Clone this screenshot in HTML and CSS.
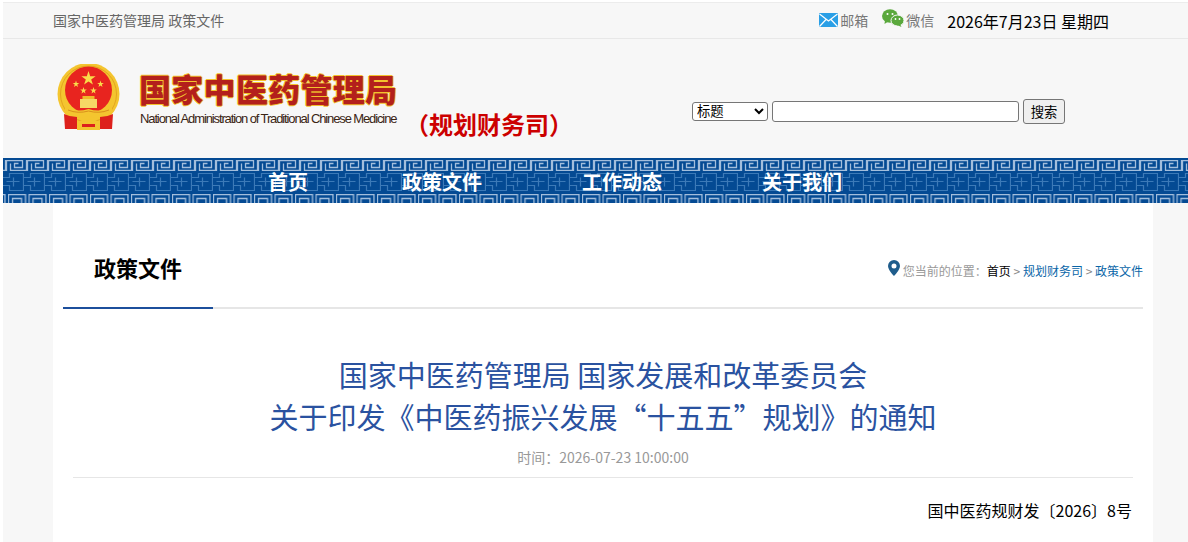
FILE: index.html
```html
<!DOCTYPE html>
<html lang="zh-CN">
<head>
    <meta charset="UTF-8">
    <title>国家中医药管理局 政策文件</title>
    <link rel="stylesheet" href="styles.css">
</head>
<body>
<div class="page">
    <div class="topbar">
        <div class="crumb-title">国家中医药管理局 政策文件</div>
        <div class="topbar-right">
            <span class="top-link top-mail">
                <svg class="mail-icon" width="19" height="14" viewBox="0 0 19 14">
                    <rect width="19" height="14" rx="1" fill="#2a9fe6"/>
                    <path d="M0.5 1 L9.5 8 L18.5 1 M0.5 13.5 L7 6.5 M18.5 13.5 L12 6.5" fill="none" stroke="#fff" stroke-width="1.2"/>
                </svg>
                邮箱
            </span>
            <span class="top-link">
                <svg class="wechat-icon" width="22" height="18" viewBox="0 0 22 18">
                    <ellipse cx="8" cy="7" rx="8" ry="6.8" fill="#5aa83c"/>
                    <path d="M3 11 L2.5 15 L7 12 Z" fill="#5aa83c"/>
                    <ellipse cx="15.5" cy="11.5" rx="6.5" ry="5.5" fill="#5aa83c" stroke="#f7f7f7"/>
                    <path d="M18 15 L19.5 18 L15 16 Z" fill="#5aa83c"/>
                    <circle cx="5.5" cy="5" r="1" fill="#fff"/>
                    <circle cx="10.5" cy="5" r="1" fill="#fff"/>
                    <circle cx="13.5" cy="10" r="0.9" fill="#fff"/>
                    <circle cx="17.5" cy="10" r="0.9" fill="#fff"/>
                </svg>
                微信
            </span>
            <span class="date">2026年7月23日 星期四</span>
        </div>
    </div>

    <div class="header">
        <div class="logo">
            <svg class="emblem" width="64" height="68" viewBox="0 0 64 68">
                <circle cx="32.5" cy="30" r="31" fill="#f4c52f"/>
                <circle cx="32.5" cy="30" r="28" fill="none" stroke="#e3a51f" stroke-width="1"/>
                <circle cx="32.5" cy="26" r="23.5" fill="#e8241f"/>
                <rect x="24" y="35" width="17" height="9" fill="#f6d765"/>
                <rect x="26.5" y="32" width="12" height="3" fill="#f0b92a"/>
                <path d="M9 43 Q20 49 32.5 45 Q45 49 56 43 L56 50 Q45 56 32.5 52 Q20 56 9 50 Z" fill="#f4c52f"/>
                <path d="M12 46 Q22 50 32.5 47 Q43 50 53 46" fill="none" stroke="#d9911c" stroke-width="1"/>
                <path d="M8 50 Q14 53 21 53 L21 65 L9 65 Z M57 50 Q51 53 44 53 L44 65 L56 65 Z" fill="#dd211c"/>
                <path d="M21 58 Q32.5 52 44 58 L44 66 L21 66 Z" fill="#f4c52f"/>
                <rect x="26" y="60" width="13" height="3" fill="#dd211c"/>
                <polygon points="32.5,7 34.2,12.2 39.6,12.2 35.2,15.4 36.9,20.6 32.5,17.4 28.1,20.6 29.8,15.4 25.4,12.2 30.8,12.2" fill="#f9dc4a"/>
                <polygon points="20,16.5 20.8,19 23.3,19 21.3,20.5 22,23 20,21.5 18,23 18.7,20.5 16.7,19 19.2,19" fill="#f9dc4a"/>
                <polygon points="44.5,16.5 45.3,19 47.8,19 45.8,20.5 46.5,23 44.5,21.5 42.5,23 43.2,20.5 41.2,19 43.7,19" fill="#f9dc4a"/>
                <polygon points="27.5,23 28.3,25.5 30.8,25.5 28.8,27 29.5,29.5 27.5,28 25.5,29.5 26.2,27 24.2,25.5 26.7,25.5" fill="#f9dc4a"/>
                <polygon points="37.5,23 38.3,25.5 40.8,25.5 38.8,27 39.5,29.5 37.5,28 35.5,29.5 36.2,27 34.2,25.5 36.7,25.5" fill="#f9dc4a"/>
            </svg>
            <div class="logo-text">
                <div class="logo-cn">国家中医药管理局</div>
                <div class="logo-en">National Administration of Traditional Chinese Medicine</div>
            </div>
            <div class="dept">（规划财务司）</div>
        </div>
        <form class="search">
            <select class="search-type"><option>标题</option></select>
            <input class="search-input" type="text">
            <button class="search-btn" type="button">搜索</button>
        </form>
    </div>

    <div class="nav">
        <svg class="nav-bg" width="1185" height="45">
            <defs>
                <pattern id="keyTop" x="3" y="2" width="21" height="11" patternUnits="userSpaceOnUse">
                    <path d="M0.5 11 V0.5 H16.5 V7.5 H8.5 V3.5 H12.5 M4.5 3.5 V10.5 H20.5 V0" fill="none" stroke="#a3bedc" stroke-width="1.3"/>
                </pattern>
                <pattern id="keyMid" x="0" y="14" width="21" height="20" patternUnits="userSpaceOnUse">
                    <path d="M0 5.5 H6.5 V1.5 H20.5 V18.5 H6.5 V13.5 H0 M3.5 9.5 H16.5 M10.5 5.5 V14.5" fill="none" stroke="#3c7ab8" stroke-width="1.2"/>
                </pattern>
                <pattern id="keyBot" x="5" y="36" width="20.5" height="9" patternUnits="userSpaceOnUse">
                    <path d="M0.5 9 V0.5 H17.5 V9 M4.5 9 V4.5 H13.5 V9" fill="none" stroke="#a3bedc" stroke-width="1.3"/>
                </pattern>
            </defs>
            <rect width="1185" height="45" fill="#044a93"/>
            <rect y="2" width="1185" height="11" fill="url(#keyTop)"/>
            <rect y="14" width="1185" height="20" fill="url(#keyMid)"/>
            <rect y="36" width="1185" height="9" fill="url(#keyBot)"/>
        </svg>
        <a class="nav-item nav-home">首页</a>
        <a class="nav-item">政策文件</a>
        <a class="nav-item">工作动态</a>
        <a class="nav-item">关于我们</a>
    </div>

    <div class="main">
        <div class="section-head">
            <div class="section-title">政策文件</div>
            <div class="location">
                <svg class="pin" width="12" height="16" viewBox="0 0 12 16">
                    <path d="M6 0 A6 6 0 0 0 0 6 C0 10 6 16 6 16 C6 16 12 10 12 6 A6 6 0 0 0 6 0 Z M6 3.5 A2.5 2.5 0 1 1 6 8.5 A2.5 2.5 0 0 1 6 3.5 Z" fill="#1f5d8c" fill-rule="evenodd"/>
                </svg>
                <span class="loc-label">您当前的位置：</span><a class="loc-home">首页</a><span class="loc-sep"> &gt; </span><a class="loc-link">规划财务司</a><span class="loc-sep"> &gt; </span><a class="loc-link">政策文件</a>
            </div>
        </div>
        <div class="article-head">
            <h1 class="article-title">国家中医药管理局 国家发展和改革委员会<br>关于印发《中医药振兴发展“十五五”规划》的通知</h1>
            <div class="article-time">时间：2026-07-23 10:00:00</div>
        </div>
        <p class="doc-no">国中医药规财发〔2026〕8号</p>
    </div>
</div>
</body>
</html>
```

FILE: styles.css
```css
* {
    box-sizing: border-box;
}
body {
    margin: 0;
    padding: 2px 0 0 3px;
    background: #fff;
    font-family: "Noto Sans CJK SC", "Noto Sans", sans-serif;
    color: #000;
}
.page {
    height: 540px;
    background: #f7f7f7;
    overflow: hidden;
}
.topbar {
    height: 37px;
    background: #f7f7f7;
    border-top: 1px solid #ececec;
    border-bottom: 1px solid #e8e8e8;
    padding: 0 79px 0 50px;
    display: flex;
    justify-content: space-between;
    align-items: center;
    font-size: 14px;
    color: #666;
}
.crumb-title {
    margin-bottom: 2px;
}
.topbar-right {
    display: flex;
    align-items: center;
}
.top-link {
    display: flex;
    align-items: center;
    gap: 3px;
    margin-right: 12px;
    margin-bottom: 2px;
    color: #777;
}
.top-mail {
    gap: 2px;
    margin-right: 14px;
}
.wechat-icon {
    margin: -3px -1px 0 0;
}
.mail-icon {
    margin-top: 0;
}
.date {
    font-size: 16px;
    color: #000;
    margin-left: 1px;
}
.header {
    height: 119px;
    background: #f7f7f7;
    display: flex;
    padding: 25px 0 0 53px;
}
.logo {
    display: flex;
    width: 636px;
}
.logo-text {
    margin-left: 19px;
    padding-top: 2px;
    width: 258px;
}
.logo-cn {
    font-size: 32px;
    line-height: 44px;
    font-weight: 900;
    letter-spacing: 0.3px;
    color: #b3201c;
    text-shadow: 1px 0 0 #f3c22e, -1px 0 0 #f3c22e, 0 1px 0 #f3c22e, 0 -1px 0 #f3c22e;
    white-space: nowrap;
}
.logo-en {
    margin: 2px 0 0 1px;
    font-family: "Liberation Sans", sans-serif;
    font-size: 13px;
    line-height: 14px;
    letter-spacing: -1.12px;
    color: #3a2414;
    white-space: nowrap;
}
.dept {
    font-size: 24px;
    font-weight: 700;
    color: #c00;
    white-space: nowrap;
    margin: 40px 0 0 8px;
    line-height: 40px;
}
.search {
    display: flex;
    align-items: center;
    gap: 4px;
    height: 26px;
    margin-top: 34px;
}
.search-type {
    width: 76px;
    height: 19px;
    font-size: 13.33px;
    font-family: "Liberation Sans", "Noto Sans CJK SC", sans-serif;
    background: #fff;
    padding: 0;
    border: 1px solid #767676;
    border-radius: 3px;
}
.search-input {
    width: 247px;
    height: 21px;
    border: 1px solid #767676;
    border-radius: 3px;
    background: #fff;
}
.search-btn {
    width: 42px;
    height: 25px;
    padding: 0;
    font-size: 13.33px;
    font-family: "Liberation Sans", "Noto Sans CJK SC", sans-serif;
    background: #efefef;
    border: 1px solid #767676;
    border-radius: 3px;
}
.nav {
    position: relative;
    height: 45px;
    display: flex;
    padding-left: 265px;
    overflow: hidden;
}
.nav-bg {
    position: absolute;
    left: 0;
    top: 0;
}
.nav-item {
    position: relative;
    width: 180px;
    font-size: 20px;
    font-weight: 700;
    line-height: 48px;
    color: #fff;
    white-space: nowrap;
}
.nav-home {
    width: 134px;
}
.main {
    margin: 0 35px 0 50px;
    height: 339px;
    background: #fff;
    padding: 0 10px;
    overflow: hidden;
}
.section-head {
    height: 106px;
    border-bottom: 2px solid #e6e6e6;
    display: flex;
    justify-content: space-between;
}
.section-title {
    width: 150px;
    height: 106px;
    border-bottom: 2px solid #1c4f9c;
    padding: 47px 0 0 31px;
    font-size: 22px;
    line-height: 34px;
    font-weight: 700;
}
.location {
    font-size: 12px;
    padding-top: 57px;
    color: #999;
    line-height: 18px;
    white-space: nowrap;
}
.pin {
    vertical-align: 0;
}
.loc-home {
    color: #000;
}
.loc-link {
    color: #0a66a8;
}
.loc-sep {
    color: #888;
}
.article-head {
    margin: 0 10px;
    padding: 44px 0 10px;
    text-align: center;
    border-bottom: 1px solid #e6e6e6;
}
.article-title {
    margin: 0;
    font-size: 29px;
    line-height: 42px;
    font-weight: 400;
    color: #2a52a0;
}
.article-time {
    margin-top: 10px;
    font-size: 14px;
    line-height: 20px;
    color: #999;
}
.doc-no {
    margin: 20px 11px 0 0;
    font-size: 16px;
    line-height: 24px;
    text-align: right;
}
```
